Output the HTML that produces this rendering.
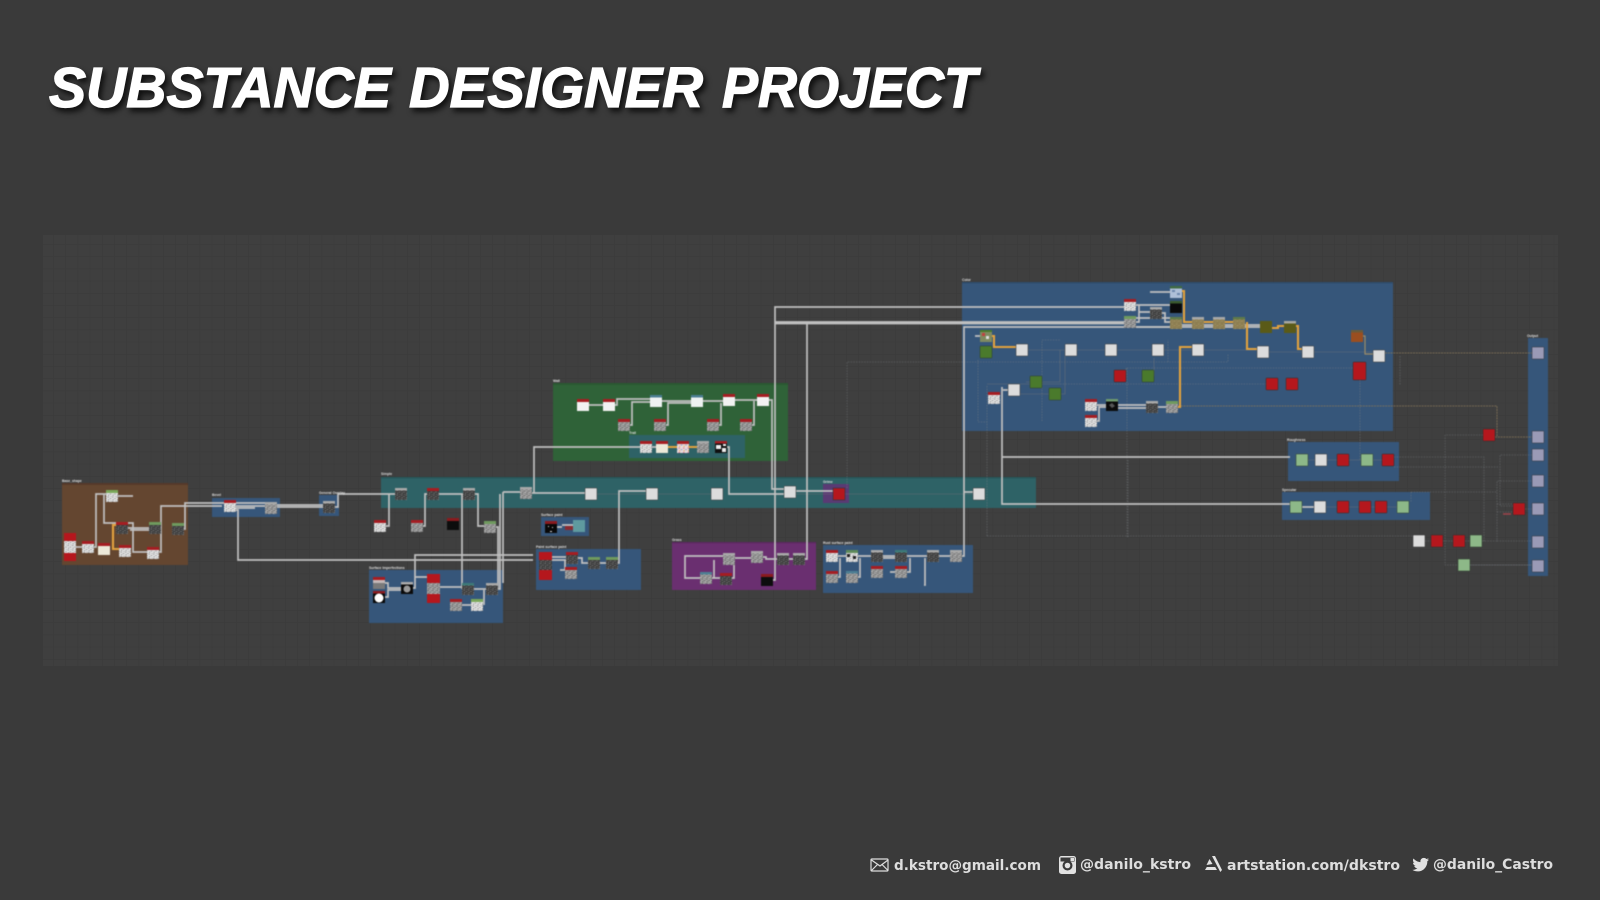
<!DOCTYPE html>
<html><head><meta charset="utf-8"><title>Substance Designer Project</title>
<style>
html,body{margin:0;padding:0;background:#3a3a3a;width:1600px;height:900px;overflow:hidden}
svg{display:block;position:absolute;left:0;top:0}
.w{fill:none;stroke:#c0c0c0;stroke-width:1.7}
.o{fill:none;stroke:#e2a23e;stroke-width:2.1}
.t{fill:none;stroke:#6f7478;stroke-width:.6;opacity:.8}
.d{fill:none;stroke:#7d8286;stroke-width:.55;stroke-dasharray:1.5 1.2;opacity:.75}
.a{fill:none;stroke:#86765a;stroke-width:.8;stroke-dasharray:2 .8}
.lb{font:bold 3.4px "Liberation Sans",sans-serif;fill:#ddd}
.ft{font:bold 14px "DejaVu Sans",sans-serif;fill:#dedede}
.title{font:italic bold 57px "Liberation Sans",sans-serif;fill:#fff;stroke:#fff;stroke-width:1.3;filter:drop-shadow(3px 4px 3px rgba(0,0,0,.75))}
.g{filter:blur(.5px)}
</style></head><body>
<svg width="1600" height="900" viewBox="0 0 1600 900" xmlns="http://www.w3.org/2000/svg">
<defs>
<pattern id="grid" x="41" y="232" width="12.2" height="12.2" patternUnits="userSpaceOnUse">
<rect width="12.2" height="12.2" fill="#3f3f3f"/><path d="M0 0H12.2M0 0V12.2" stroke="#3a3a3a" stroke-width="1" fill="none"/>
</pattern>
<pattern id="nw" width="6" height="6" patternUnits="userSpaceOnUse" patternTransform="scale(.75)"><rect width="6" height="6" fill="#e2e2e2"/><path d="M0 1h2v1H0zM3 3h2v1H3zM1 4h1v2H1zM4 0h1v1H4z" fill="#888"/></pattern>
<pattern id="nm" width="6" height="6" patternUnits="userSpaceOnUse" patternTransform="scale(.75)"><rect width="6" height="6" fill="#979797"/><path d="M0 1h2v1H0zM3 3h2v1H3zM1 4h1v2H1zM4 0h1v1H4z" fill="#6a6a6a"/><path d="M3 1h1v1H3zM0 3h1v1H0zM4 5h2v1H4z" fill="#c2c2c2"/></pattern>
<pattern id="nd" width="6" height="6" patternUnits="userSpaceOnUse" patternTransform="scale(.75)"><rect width="6" height="6" fill="#3e3e3e"/><path d="M0 1h2v1H0zM3 3h2v1H3zM1 4h1v2H1zM4 0h1v1H4z" fill="#7c7c7c"/></pattern>
<pattern id="nt" width="6" height="6" patternUnits="userSpaceOnUse" patternTransform="scale(.75)"><rect width="6" height="6" fill="#8d7e52"/><path d="M0 1h2v1H0zM3 3h2v1H3zM1 4h1v1H1z" fill="#a89868"/></pattern>
<pattern id="nc" width="6" height="6" patternUnits="userSpaceOnUse" patternTransform="scale(.75)"><rect width="6" height="6" fill="#e8d8d8"/><path d="M0 1h2v1H0z" fill="#d0568a"/><path d="M3 3h2v1H3z" fill="#6c8ad0"/><path d="M1 4h1v2H1z" fill="#e8a040"/></pattern>
<g id="rw"><rect x="-6" y="-6" width="12" height="12" fill="#f2f2f2"/><rect x="-6" y="-6" width="12" height="3" fill="#a51d22"/></g>
<g id="rc"><rect x="-6" y="-6" width="12" height="12" fill="#ece8d8"/><rect x="-6" y="-6" width="12" height="3" fill="#a51d22"/></g>
<g id="rn"><rect x="-6" y="-6" width="12" height="12" fill="url(#nw)"/><rect x="-6" y="-6" width="12" height="3" fill="#a51d22"/></g>
<g id="rm"><rect x="-6" y="-6" width="12" height="12" fill="url(#nm)"/><rect x="-6" y="-6" width="12" height="3" fill="#a51d22"/></g>
<g id="rd"><rect x="-6" y="-6" width="12" height="12" fill="url(#nd)"/><rect x="-6" y="-6" width="12" height="3" fill="#a51d22"/></g>
<g id="rk"><rect x="-6" y="-6" width="12" height="12" fill="#0d0d0d"/><rect x="-6" y="-6" width="12" height="3" fill="#8a1a1e"/></g>
<g id="gw"><rect x="-6" y="-6" width="12" height="12" fill="url(#nw)"/><rect x="-6" y="-6" width="12" height="3" fill="#7aa85a"/></g>
<g id="gm"><rect x="-6" y="-6" width="12" height="12" fill="url(#nm)"/><rect x="-6" y="-6" width="12" height="3" fill="#6f9a5e"/></g>
<g id="gd"><rect x="-6" y="-6" width="12" height="12" fill="url(#nd)"/><rect x="-6" y="-6" width="12" height="3" fill="#6f9a5e"/></g>
<g id="dk"><rect x="-6" y="-6" width="12" height="12" fill="url(#nd)"/><rect x="-6" y="-6" width="12" height="2.5" fill="#a8a8a8"/></g>
<g id="m"><rect x="-6" y="-6" width="12" height="12" fill="url(#nm)"/><rect x="-6" y="-6" width="12" height="2.5" fill="#a8a8a8"/></g>
<g id="bw"><rect x="-6" y="-6" width="12" height="12" fill="#eef2f2"/><rect x="-6" y="-6" width="12" height="2.5" fill="#4d7f94"/></g>
<g id="bm"><rect x="-6" y="-6" width="12" height="12" fill="url(#nm)"/><rect x="-6" y="-6" width="12" height="2.5" fill="#4d7f94"/></g>
<g id="tm"><rect x="-6" y="-6" width="12" height="12" fill="url(#nd)"/><rect x="-6" y="-6" width="12" height="2.5" fill="#3d7a78"/></g>
<g id="tan"><rect x="-6" y="-6" width="12" height="12" fill="url(#nt)"/><rect x="-6" y="-6" width="12" height="2.5" fill="#5f7a4a"/></g>
<g id="tag"><rect x="-6" y="-6" width="12" height="12" fill="url(#nt)"/><rect x="-6" y="-6" width="12" height="2.5" fill="#a8a8a8"/></g>
<rect id="pl" x="-6" y="-6" width="12" height="12" rx=".8" fill="#dcdcdc" stroke="#2e2e2e" stroke-width=".5"/>
<rect id="red" x="-6" y="-6" width="12" height="12" rx=".6" fill="#b5171d" stroke="#2e2e2e" stroke-width=".5"/>
<rect id="grn" x="-6" y="-6" width="12" height="12" rx=".6" fill="#4a7a2c" stroke="#2e3e2e" stroke-width=".5"/>
<rect id="lg" x="-6" y="-6" width="12" height="12" rx=".6" fill="#8db888" stroke="#2e3e2e" stroke-width=".5"/>
<rect id="lav" x="-6" y="-6" width="12" height="12" rx=".6" fill="#9a9ab6" stroke="#2e3038" stroke-width=".5"/>
</defs>
<rect width="1600" height="900" fill="#3a3a3a"/>
<rect x="43" y="235" width="1515" height="431" fill="url(#grid)"/>

<g class="g">
<!-- frames -->
<rect x="62" y="483" width="126" height="82" fill="#644630"/><rect x="62" y="483" width="126" height="2" fill="#56392a"/>
<rect x="212" y="498" width="68" height="19" fill="#36567a"/>
<rect x="319" y="495" width="20" height="21" fill="#36567a"/>
<rect x="381" y="477" width="655" height="31" fill="#2e6266"/><rect x="381" y="477" width="655" height="1.5" fill="#27565a"/>
<rect x="369" y="570" width="134" height="53" fill="#36567a"/>
<rect x="553" y="383" width="235" height="78" fill="#2f6238"/><rect x="553" y="383" width="235" height="2" fill="#2a5832"/>
<rect x="629" y="435" width="116" height="23" fill="#2e6266"/>
<rect x="541" y="517" width="48" height="19" fill="#36567a"/>
<rect x="536" y="549" width="105" height="41" fill="#36567a"/>
<rect x="672" y="542" width="144" height="48" fill="#6a2f70"/><rect x="672" y="542" width="144" height="1.5" fill="#5d2862"/>
<rect x="823" y="545" width="150" height="48" fill="#36567a"/>
<rect x="823" y="484" width="26" height="19" fill="#5a3a74"/>
<rect x="962" y="282" width="431" height="149" fill="#36567a"/><rect x="962" y="282" width="431" height="1.5" fill="#2f4c6c"/>
<rect x="1288" y="442" width="111" height="39" fill="#36567a"/>
<rect x="1282" y="492" width="148" height="28" fill="#36567a"/>
<rect x="1528" y="338" width="20" height="238" fill="#36567a"/>

<!-- thin wires -->
<path class="d" d="M847 488V362H1228V354M987 536V385M978 360V422H987M987 536H1413M1042 421V340H1060M1060 384H1272M1127 368H1353M1127 368V538M1168 362V340M1128 460V538M1360 380V460M1400 356V385"/>
<path class="t" d="M597 494H646M658 494H711M1028 350H1065M1077 350H1105M1117 350H1152M1164 350H1192M1204 350H1257M1269 352H1302M1314 352H1373M1363 336H1365V354H1373M987 384H1060M1020 394H1030M1026 382H1030M1042 382H1060V350M1020 394H1049M1061 394H1065V350M1154 376V358M1126 376V368M796 494H833M845 494H973"/>
<path class="a" d="M1385 353H1532M1178 406H1497V436M1495 437H1532"/>
<path class="d" d="M1394 457H1484V541H1482M1394 467H1498M1411 492H1497M1483 435H1445V565H1458M1470 565H1532M1482 541H1497V481H1532M1497 541H1532M1532 455H1500V506H1513M1497 504H1513M1497 512H1513M1525 509H1532M1411 492V502M1425 541H1431M1443 541H1453M1465 541H1470"/>
<path class="t" d="M1308 460H1315M1327 460H1337M1349 460H1361M1373 460H1382M1302 507H1314M1326 507H1337M1349 507H1359M1371 507H1375M1387 507H1397M1470 565H1532"/>
<path d="M1503 514H1511" stroke="#a0444c" stroke-width="1.5" fill="none"/>

<!-- white wires -->
<path class="w" d="M76 547H82M94 547H96V494H106M104 494V523H116M128 523H133V552H147M128 528H149M130 530H149M159 552H161V506H222M118 496H133M184 529H185V503H224M161 528H149M236 503H265M236 506H265M236 510H238V560H533M236 508H255M277 505H323M277 507H323M335 507H338V494H395M386 526H389V494H395M423 526H425V494H427M439 494H463M462 494V589M475 494H478V526H484M496 527H498V589H497M500 494V589H498M503 492H525M503 492V583M413 588H415V555H533M415 577H427M385 583H388V588H401M385 597H388V590H401M440 587H462M474 589H486M484 605V590M462 605H471"/>
<path class="w" d="M532 493H585M534 493V447H640M618 563H619V491H646M727 447H729V494H784M652 447H656M796 491H833M964 492H973M589 405H603M615 405H617V399H650M630 425H632V402H650M662 401H691M666 425H668V403H691M703 401H723M719 425H721V403M735 400H757M752 425H754V401M769 400H772V489H784M773 580H775V307H1124M775 322H1124M805 559H807V322H1124M775 323.5H1124"/>
<path class="w" d="M557 527H562M562 525H573M551 557H566M551 560H566M578 558H582V563H588M560 570H565V560M600 563H606M618 563H618M700 578H685V556H723M712 578H714V560M732 578H734V561H723M735 558H751M763 557H766V559H777M789 559H793M805 559H807M714 578H722M838 556H846M858 556H871M883 556H895M907 556H927M939 556H950M838 577H840V558M858 577H860V558M907 572H910V558M890 572H895M924 585H925V558M880 558H895M962 556H964V327H1180M1002 387V504H1290M1002 457H1290M1008 390H1003M1296 460H1296M1302 507H1314"/>
<path class="w" d="M1136 305H1141H1170M1136 322H1139V305M1162 313H1165V322H1170M1136 318H1170M1136 327H1260M1097 405H1106M1097 421H1099V407H1106M1118 405H1146M1118 408H1146M1158 407H1166M1150 292H1170M1182 325H1260M975 336H980M1139 312H1150"/>
<path class="o" d="M116 525H113V549H119"/>
<path class="o" d="M668 447H677M689 447H697M1182 291H1184V322H1245M1246 323H1247V349H1257M1272 328H1278V326H1284M1296 326H1298V349H1302M992 336H994V347H1016M1178 407H1180V347H1192"/>
<path d="M1363 336H1365V354H1373" fill="none" stroke="#9a8a68" stroke-width="1.2"/>

<!-- nodes: Base -->
<rect x="64" y="533" width="12" height="28" fill="#b5171d"/><rect x="64" y="541" width="12" height="12" fill="url(#nw)"/>
<use href="#rn" x="88" y="547"/><use href="#rc" x="104" y="549"/><use href="#gw" x="112" y="496"/>
<use href="#rd" x="122" y="528"/><use href="#rn" x="125" y="551"/><use href="#gd" x="155" y="528"/>
<use href="#rn" x="153" y="553"/><use href="#gd" x="178" y="529"/>
<use href="#rn" x="230" y="506"/><use href="#m" x="271" y="508"/><use href="#dk" x="329" y="507"/>
<use href="#dk" x="401" y="494"/><use href="#rd" x="433" y="494"/><use href="#dk" x="469" y="494"/>
<use href="#rn" x="380" y="526"/><use href="#rm" x="417" y="526"/><use href="#rk" x="453" y="524"/><use href="#gm" x="490" y="527"/>
<!-- imperfections -->
<g transform="translate(379 583)"><rect x="-6" y="-6" width="12" height="12" fill="#7a7a7a"/><rect x="-6" y="-6" width="12" height="3" fill="#a51d22"/><rect x="-6" y="-3" width="12" height="3" fill="#c4b8b8"/></g>
<g transform="translate(379 597)"><rect x="-6" y="-6" width="12" height="12" fill="#080808"/><rect x="-6" y="-6" width="12" height="2.5" fill="#8a1a1e"/><circle r="4.5" cy="1" fill="#fff"/></g>
<g transform="translate(407 588)"><rect x="-6" y="-6" width="12" height="12" fill="#0a0a0a"/><rect x="-6" y="-6" width="12" height="2.5" fill="#aaa"/><circle r="3.5" cy="1" fill="#999"/></g>
<rect x="427" y="574" width="13" height="29" fill="#b5171d"/><rect x="427" y="583" width="13" height="11" fill="url(#nm)"/>
<use href="#tm" x="468" y="589"/><use href="#dk" x="492" y="589"/><use href="#rm" x="456" y="605"/><use href="#gw" x="477" y="605"/>
<!-- wall -->
<use href="#rw" x="583" y="405"/><use href="#rw" x="609" y="405"/><use href="#bw" x="656" y="401"/><use href="#bw" x="697" y="401"/><use href="#rw" x="729" y="400"/><use href="#rw" x="763" y="400"/>
<use href="#rm" x="624" y="425"/><use href="#rm" x="660" y="425"/><use href="#rm" x="713" y="425"/><use href="#rm" x="746" y="425"/>
<use href="#rn" x="646" y="447"/><use href="#rc" x="662" y="447"/>
<g transform="translate(683 447)"><rect x="-6" y="-6" width="12" height="12" fill="url(#nc)"/><rect x="-6" y="-6" width="12" height="3" fill="#a51d22"/></g>
<use href="#m" x="703" y="447"/>
<g transform="translate(721 447)"><rect x="-6" y="-6" width="12" height="12" fill="#101010"/><path d="M-5-2h5v4h-5zM1 1h4v4h-4zM2-3h3v2h-3z" fill="#eee"/><rect x="-6" y="-6" width="12" height="2.5" fill="#a51d22"/></g>
<!-- teal row -->
<use href="#m" x="526" y="493"/><use href="#pl" x="591" y="494"/><use href="#pl" x="652" y="494"/><use href="#pl" x="717" y="494"/><use href="#pl" x="790" y="492"/><use href="#pl" x="979" y="494"/>
<g transform="translate(839 494)"><rect x="-6" y="-6" width="12" height="12" fill="#b5171d" stroke="#2a3a44" stroke-width=".6"/></g>
<!-- surface paint -->
<g transform="translate(551 527)"><rect x="-6" y="-6" width="12" height="12" fill="#080808"/><rect x="-6" y="-6" width="12" height="3" fill="#8a1a1e"/><path d="M-3-1h1v1h-1zM1 0h1v1h-1zM-1 4h2v1h-2z" fill="#ddd"/></g>
<rect x="573" y="520" width="12" height="12" fill="#5f9a9f"/><rect x="565" y="526" width="8" height="4" fill="#8a2a30"/>
<rect x="539" y="552" width="13" height="28" fill="#b5171d"/><rect x="539" y="560" width="13" height="10" fill="url(#nd)"/>
<use href="#rd" x="572" y="558"/><use href="#rm" x="571" y="573"/><use href="#gd" x="594" y="563"/><use href="#gd" x="612" y="563"/>
<!-- purple -->
<use href="#m" x="729" y="559"/><use href="#m" x="757" y="557"/><use href="#dk" x="783" y="559"/><use href="#dk" x="799" y="559"/><use href="#bm" x="706" y="578"/><use href="#rd" x="726" y="579"/>
<use href="#rk" x="767" y="580"/>
<!-- rust -->
<use href="#rn" x="832" y="556"/>
<g transform="translate(852 556)"><rect x="-6" y="-6" width="12" height="12" fill="url(#nw)"/><rect x="-6" y="-6" width="12" height="3" fill="#5f8a5a"/><path d="M-5-2h3v3h-3zM1 0h3v3h-3z" fill="#222"/></g>
<use href="#dk" x="877" y="556"/><use href="#tm" x="901" y="556"/><use href="#dk" x="933" y="556"/><use href="#m" x="956" y="556"/>
<use href="#rm" x="832" y="577"/><use href="#bm" x="852" y="577"/><use href="#rm" x="877" y="572"/><use href="#rm" x="901" y="572"/>
<!-- colour -->
<g transform="translate(1176 292)"><rect x="-6" y="-6" width="12" height="12" fill="#aebfd8"/><path d="M-4-2h3v2h-3zM1 1h3v2h-3z" fill="#6c86ac"/><rect x="-6" y="-6" width="12" height="2.5" fill="#3f6a44"/></g>
<g transform="translate(1176 307)"><rect x="-6" y="-6" width="12" height="12" fill="#0a0a0a"/><rect x="-6" y="-6" width="12" height="2.5" fill="#3a5a2e"/></g>
<use href="#tan" x="1176" y="323"/><use href="#tag" x="1198" y="323"/><use href="#tag" x="1219" y="323"/><use href="#tan" x="1239" y="323"/>
<rect x="1260" y="321" width="12" height="12" fill="#5a5a18"/>
<g transform="translate(1290 327)"><rect x="-6" y="-6" width="12" height="12" fill="#5a5a18"/><rect x="-6" y="-6" width="12" height="2.5" fill="#a8a8a0"/></g>
<use href="#rn" x="1130" y="305"/><use href="#gm" x="1130" y="322"/><use href="#dk" x="1156" y="313"/>
<g transform="translate(986 336)"><rect x="-6" y="-6" width="12" height="12" fill="#7f8a60"/><path d="M-4-3h3v3h-3z" fill="#c04040"/><path d="M0 0h3v3h-3z" fill="#ddd"/><rect x="-6" y="-6" width="12" height="2" fill="#4a7a2c"/></g>
<use href="#grn" x="986" y="352"/><use href="#pl" x="1022" y="350"/><use href="#pl" x="1071" y="350"/><use href="#pl" x="1111" y="350"/><use href="#pl" x="1158" y="350"/><use href="#pl" x="1198" y="350"/><use href="#pl" x="1263" y="352"/><use href="#pl" x="1308" y="352"/><use href="#pl" x="1379" y="356"/>
<rect x="1351" y="330" width="12" height="12" fill="#9a4e20"/><rect x="1351" y="330" width="12" height="2.5" fill="#6a5a3a"/>
<rect x="1353" y="362" width="13" height="18" rx=".6" fill="#b5171d" stroke="#2e2e2e" stroke-width=".5"/>
<use href="#red" x="1120" y="376"/><use href="#grn" x="1148" y="376"/><use href="#grn" x="1036" y="382"/><use href="#grn" x="1055" y="394"/><use href="#pl" x="1014" y="390"/><use href="#rn" x="994" y="398"/>
<use href="#red" x="1272" y="384"/><use href="#red" x="1292" y="384"/>
<use href="#rn" x="1091" y="405"/><use href="#rn" x="1091" y="421"/>
<g transform="translate(1112 405)"><rect x="-6" y="-6" width="12" height="12" fill="#0c0c0c"/><rect x="-6" y="-6" width="12" height="2.5" fill="#6f9a6e"/><path d="M-3 0l3-2 3 3-3 2z" fill="#555"/></g>
<use href="#dk" x="1152" y="407"/><use href="#gm" x="1172" y="407"/>
<!-- roughness etc -->
<use href="#lg" x="1302" y="460"/><use href="#pl" x="1321" y="460"/><use href="#red" x="1343" y="460"/><use href="#lg" x="1367" y="460"/><use href="#red" x="1388" y="460"/>
<use href="#lg" x="1296" y="507"/><use href="#pl" x="1320" y="507"/><use href="#red" x="1343" y="507"/><use href="#red" x="1365" y="507"/><use href="#red" x="1381" y="507"/><use href="#lg" x="1403" y="507"/>
<use href="#red" x="1489" y="435"/><use href="#red" x="1519" y="509"/><use href="#pl" x="1419" y="541"/><use href="#red" x="1437" y="541"/><use href="#red" x="1459" y="541"/><use href="#lg" x="1476" y="541"/><use href="#lg" x="1464" y="565"/>
<use href="#lav" x="1538" y="353"/><use href="#lav" x="1538" y="437"/><use href="#lav" x="1538" y="455"/><use href="#lav" x="1538" y="481"/><use href="#lav" x="1538" y="509"/><use href="#lav" x="1538" y="542"/><use href="#lav" x="1538" y="566"/>

<!-- frame labels -->
<text class="lb" x="62" y="482">Base_shape</text>
<text class="lb" x="212" y="496">Bevel</text>
<text class="lb" x="319" y="494">General Overlay</text>
<text class="lb" x="381" y="475">Simple</text>
<text class="lb" x="369" y="569">Surface Imperfections</text>
<text class="lb" x="553" y="382">Wall</text>
<text class="lb" x="629" y="434">Trail</text>
<text class="lb" x="541" y="516">Surface paint</text>
<text class="lb" x="536" y="548">Paint surface paint</text>
<text class="lb" x="672" y="541">Grass</text>
<text class="lb" x="823" y="483">Grime</text>
<text class="lb" x="823" y="544">Rust surface paint</text>
<text class="lb" x="962" y="281">Color</text>
<text class="lb" x="1287" y="441">Roughness</text>
<text class="lb" x="1282" y="491">Specular</text>
<text class="lb" x="1527" y="337">Output</text>
</g>

<!-- title -->
<text class="title" x="49" y="107" textLength="342" lengthAdjust="spacingAndGlyphs">SUBSTANCE</text>
<text class="title" x="409" y="107" textLength="294" lengthAdjust="spacingAndGlyphs">DESIGNER</text>
<text class="title" x="722" y="107" textLength="255" lengthAdjust="spacingAndGlyphs">PROJECT</text>

<!-- footer -->
<g fill="none" stroke="#dedede" stroke-width="1.2"><rect x="871" y="859" width="17" height="12" rx="1"/><path d="M871.5 860l8.5 6 8-6M871.5 870.5l6-6M888 870.5l-6-6"/></g>
<text class="ft" x="894" y="870" textLength="147" lengthAdjust="spacingAndGlyphs">d.kstro@gmail.com</text>
<g><rect x="1059" y="856" width="17" height="18" rx="2.5" fill="#e2e2e2"/><circle cx="1067.5" cy="865.5" r="5" fill="#3a3a3a"/><circle cx="1067.5" cy="865.5" r="2.8" fill="#e2e2e2"/><rect x="1060.5" y="857.5" width="14" height="4" fill="#3a3a3a"/><rect x="1070.5" y="858" width="3.5" height="3" fill="#e2e2e2"/></g>
<text class="ft" x="1080" y="869" textLength="111" lengthAdjust="spacingAndGlyphs">@danilo_kstro</text>
<path d="M1205 871h12l-1.8-3h-8.4zM1206.5 866l6-1-3-5zM1212 857h3l7 14-1.7 2z" fill="#e2e2e2" transform="translate(0 -1)"/>
<text class="ft" x="1227" y="870" textLength="173" lengthAdjust="spacingAndGlyphs">artstation.com/dkstro</text>
<path d="M1429 859.5c-.6.3-1.3.5-2 .6.7-.4 1.3-1.1 1.5-1.9-.7.4-1.4.7-2.2.8-.6-.7-1.5-1.1-2.5-1.1-1.9 0-3.4 1.5-3.4 3.4 0 .3 0 .5.1.8-2.8-.1-5.3-1.5-7-3.6-.3.5-.5 1.1-.5 1.7 0 1.2.6 2.2 1.5 2.8-.6 0-1.1-.2-1.5-.4 0 1.6 1.2 3 2.7 3.3-.5.1-1 .2-1.5.1.4 1.3 1.7 2.3 3.2 2.3-1.4 1.1-3.2 1.8-5 1.6 1.5 1 3.3 1.5 5.2 1.5 6.2 0 9.7-5.2 9.7-9.7v-.4c.7-.5 1.3-1.1 1.7-1.8z" fill="#e2e2e2"/>
<text class="ft" x="1433" y="869" textLength="120" lengthAdjust="spacingAndGlyphs">@danilo_Castro</text>
</svg>
</body></html>
